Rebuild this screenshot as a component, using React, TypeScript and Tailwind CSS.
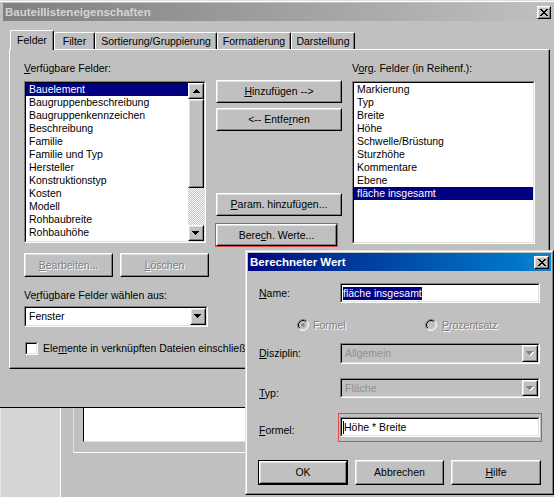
import React from "react";

type P = { className?: string; innerClassName?: string; children?: React.ReactNode };

function Raised({ className = "", innerClassName = "", children }: P) {
  return (
    <div className={`border border-t-white border-l-white border-r-black border-b-black bg-[#c0c0c0] ${className}`}>
      <div
        className={`w-full h-full border border-t-[#dfdfdf] border-l-[#dfdfdf] border-r-[#808080] border-b-[#808080] flex items-center justify-center ${innerClassName}`}
      >
        {children}
      </div>
    </div>
  );
}

function Sunken({ className = "", innerClassName = "bg-white", children }: P) {
  return (
    <div className={`border border-t-[#808080] border-l-[#808080] border-r-white border-b-white ${className}`}>
      <div
        className={`w-full h-full border border-t-black border-l-black border-r-[#dfdfdf] border-b-[#dfdfdf] overflow-hidden ${innerClassName}`}
      >
        {children}
      </div>
    </div>
  );
}

const dis = "text-[#808080] [text-shadow:1px_1px_0_#fff]";

function DownArrow({ disabled = false }: { disabled?: boolean }) {
  const d = "M0 0h7v1H0z M1 1h5v1H1z M2 2h3v1H2z M3 3h1v1H3z";
  return (
    <svg width="8" height="5" viewBox="0 0 8 5" className="block">
      {disabled && <path d={d} fill="#fff" transform="translate(1 1)" />}
      <path d={d} fill={disabled ? "#808080" : "#000"} />
    </svg>
  );
}

function UpArrow() {
  return (
    <svg width="7" height="4" viewBox="0 0 7 4" className="block">
      <path d="M3 0h1v1H3z M2 1h3v1H2z M1 2h5v1H1z M0 3h7v1H0z" fill="#000" />
    </svg>
  );
}

function XGlyph() {
  return (
    <svg width="8" height="7" viewBox="0 0 8 7" className="block">
      <path
        d="M0 0h2v1H0z M6 0h2v1H6z M1 1h2v1H1z M5 1h2v1H5z M2 2h4v1H2z M3 3h2v1H3z M2 4h4v1H2z M1 5h2v1H1z M5 5h2v1H5z M0 6h2v1H0z M6 6h2v1H6z"
        fill="#000"
      />
    </svg>
  );
}

function Radio({ checked }: { checked?: boolean }) {
  return (
    <svg width="12" height="12" viewBox="0 0 12 12" className="block shrink-0">
      <circle cx="6" cy="6" r="4.5" fill="#c0c0c0" />
      <path d="M9.89 2.11A5.5 5.5 0 0 0 2.11 9.89" stroke="#808080" fill="none" />
      <path d="M2.11 9.89A5.5 5.5 0 0 0 9.89 2.11" stroke="#fff" fill="none" />
      <path d="M9.18 2.82A4.5 4.5 0 0 0 2.82 9.18" stroke="#000" fill="none" />
      <path d="M2.82 9.18A4.5 4.5 0 0 0 9.18 2.82" stroke="#dfdfdf" fill="none" />
      {checked && <circle cx="6" cy="6" r="1.8" fill="#808080" />}
    </svg>
  );
}

function Tab({ children, selected, className }: { children: React.ReactNode; selected?: boolean; className: string }) {
  if (selected) {
    return (
      <div
        className={`relative z-10 h-[20px] -mb-px bg-[#c0c0c0] border-t border-l border-r border-t-white border-l-white border-r-black rounded-t-[2px] shadow-[inset_-1px_0_#808080] flex items-center justify-center whitespace-nowrap ${className}`}
      >
        {children}
      </div>
    );
  }
  return (
    <div
      className={`h-[17px] bg-[#c0c0c0] border-t border-l border-r border-t-white border-l-white border-r-black rounded-t-[2px] shadow-[inset_-1px_0_#808080] flex items-center justify-center whitespace-nowrap ${className}`}
    >
      {children}
    </div>
  );
}

const leftItems = [
  "Bauelement",
  "Baugruppenbeschreibung",
  "Baugruppenkennzeichen",
  "Beschreibung",
  "Familie",
  "Familie und Typ",
  "Hersteller",
  "Konstruktionstyp",
  "Kosten",
  "Modell",
  "Rohbaubreite",
  "Rohbauhöhe",
  "Typenkommentare",
];

const rightItems = [
  "Markierung",
  "Typ",
  "Breite",
  "Höhe",
  "Schwelle/Brüstung",
  "Sturzhöhe",
  "Kommentare",
  "Ebene",
  "fläche insgesamt",
];

export default function App() {
  return (
    <div className="relative w-[554px] h-[497px] overflow-hidden bg-[#c0c0c0] text-black font-['Liberation_Sans',Arial,sans-serif] text-[10.5px] leading-[13px]">
      {/* Main window */}
      <div className="w-[556px] h-[408px] flex flex-col bg-[#c0c0c0] border-b border-b-black">
        <div className="h-px shrink-0 bg-[#dfdfdf]" />
        <div className="h-px shrink-0 bg-white" />
        <div className="h-px shrink-0" />
        <div className="mx-[3px] h-[18px] shrink-0 flex items-center bg-linear-to-r from-[#808080] to-[#c0c0c0] pl-[2px] pr-[2px]">
          <span className="flex-1 font-bold text-[11.5px] text-[#d4d4d4]">Bauteillisteneigenschaften</span>
          <Raised className="w-[14px] h-[13px]">
            <XGlyph />
          </Raised>
        </div>

        {/* Tabs */}
        <div className="mt-[9px] h-[19px] shrink-0 flex items-end pl-[10px]">
          <Tab selected className="w-[44px]">Felder</Tab>
          <Tab className="w-[41px]">Filter</Tab>
          <Tab className="w-[122px]">Sortierung/Gruppierung</Tab>
          <Tab className="w-[74px]">Formatierung</Tab>
          <Tab className="w-[64px]">Darstellung</Tab>
        </div>

        {/* Panel */}
        <div className="ml-[9px] w-[541px] h-[320px] shrink-0 border border-t-white border-l-white border-r-black border-b-black">
          <div className="w-full h-full border-r border-b border-r-[#808080] border-b-[#808080] flex pt-[12px] pl-[14px]">
            {/* Left column */}
            <div className="w-[182px] flex flex-col">
              <div className="h-[13px] whitespace-nowrap">
                <u>V</u>erfügbare Felder:
              </div>
              <Sunken className="mt-[6px] w-[182px] h-[162px]" innerClassName="bg-white flex">
                <div className="flex-1 overflow-hidden">
                  {leftItems.map((it, i) => (
                    <div
                      key={it}
                      className={`h-[13px] pl-[3px] whitespace-nowrap ${i === 0 ? "bg-[#000080] text-white" : ""}`}
                    >
                      {it}
                    </div>
                  ))}
                </div>
                <div className="w-[16px] h-full shrink-0 flex flex-col">
                  <Raised className="w-[16px] h-[16px] shrink-0">
                    <UpArrow />
                  </Raised>
                  <Raised className="w-[16px] h-[89px] shrink-0" />
                  <div className="flex-1 bg-[repeating-conic-gradient(#c0c0c0_0%_25%,#ffffff_0%_50%)] bg-[length:2px_2px]" />
                  <Raised className="w-[16px] h-[16px] shrink-0">
                    <DownArrow />
                  </Raised>
                </div>
              </Sunken>
              <div className="mt-[10px] flex gap-[7px]">
                <Raised className="w-[89px] h-[24px] shrink-0">
                  <span className={dis}>
                    <u>B</u>earbeiten...
                  </span>
                </Raised>
                <Raised className="w-[89px] h-[24px] shrink-0">
                  <span className={dis}>
                    <u>L</u>öschen
                  </span>
                </Raised>
              </div>
              <div className="mt-[12px] h-[13px] whitespace-nowrap">
                Ve<u>r</u>fügbare Felder wählen aus:
              </div>
              <Sunken className="mt-[4px] w-[184px] h-[21px] shrink-0" innerClassName="bg-white flex items-center">
                <span className="flex-1 pl-[3px]">Fenster</span>
                <Raised className="w-[16px] h-[17px] shrink-0">
                  <DownArrow />
                </Raised>
              </Sunken>
              <div className="mt-[15px] ml-px flex items-center gap-[5px] whitespace-nowrap">
                <Sunken className="w-[13px] h-[13px] shrink-0" />
                <span>
                  Ele<u>m</u>ente in verknüpften Dateien einschließen
                </span>
              </div>
            </div>

            {/* Middle column */}
            <div className="ml-[10px] w-[126px] flex flex-col pt-[18px]">
              <Raised className="w-[126px] h-[23px]">
                <span>
                  <u>H</u>inzufügen --&gt;
                </span>
              </Raised>
              <Raised className="mt-[5px] w-[126px] h-[23px]">
                <span>
                  &lt;-- Entfe<u>r</u>nen
                </span>
              </Raised>
              <Raised className="mt-[62px] w-[126px] h-[23px]">
                <span>
                  <u>P</u>aram. hinzufügen...
                </span>
              </Raised>
              <div className="mt-[7px] -ml-px w-[123px] h-[24px] border border-[#e04848]">
                <Raised className="w-full h-full border-t-transparent border-l-transparent">
                  <span>
                    Bere<u>c</u>h. Werte...
                  </span>
                </Raised>
              </div>
            </div>

            {/* Right column */}
            <div className="ml-[10px] w-[183px] flex flex-col">
              <div className="h-[13px] whitespace-nowrap">
                V<u>o</u>rg. Felder (in Reihenf.):
              </div>
              <Sunken className="mt-[6px] w-[183px] h-[163px]" innerClassName="bg-white">
                {rightItems.map((it, i) => (
                  <div
                    key={it}
                    className={`h-[13px] pl-[3px] whitespace-nowrap ${
                      i === rightItems.length - 1 ? "bg-[#000080] text-white" : ""
                    }`}
                  >
                    {it}
                  </div>
                ))}
              </Sunken>
            </div>
          </div>
        </div>
      </div>

      {/* Background application below the window */}
      <div className="h-[89px] flex">
        <div className="w-[61px] h-full bg-[#d4d4d4] border-l border-l-[#e8e8e8] border-r border-r-white" />
        <div className="w-[12px]" />
        <div className="flex-1 h-[45px] border-l border-l-[#e0e0e0] border-b border-b-white pl-[9px]">
          <div className="h-[34px] bg-white border-l border-l-black border-b border-b-[#dfdfdf]" />
        </div>
      </div>

      {/* Dialog: Berechneter Wert */}
      <div className="absolute left-[245px] top-[250px] w-[309px] h-[245px] border border-t-[#dfdfdf] border-l-[#dfdfdf] border-r-black border-b-black bg-[#c0c0c0]">
        <div className="w-full h-full border border-t-white border-l-white border-r-[#808080] border-b-[#808080] p-px flex flex-col">
          <div className="h-[18px] shrink-0 flex items-center bg-linear-to-r from-[#000080] to-[#1084d0] pl-[2px] pr-[2px]">
            <span className="flex-1 font-bold text-white text-[11.5px]">Berechneter Wert</span>
            <Raised className="w-[15px] h-[13px]">
              <XGlyph />
            </Raised>
          </div>

          <div className="pl-[11px] flex flex-col">
            {/* Name */}
            <div className="mt-[12px] h-[20px] flex items-center">
              <div className="w-[81px]">
                <u>N</u>ame:
              </div>
              <Sunken className="w-[200px] h-[20px]" innerClassName="bg-white flex items-center pl-px">
                <span className="bg-[#000080] text-white whitespace-nowrap">fläche insgesamt</span>
              </Sunken>
            </div>

            {/* Radios */}
            <div className="mt-[16px] h-[12px] flex items-center pl-[38px]">
              <div className="w-[128px] flex items-center gap-[4px]">
                <Radio checked />
                <span className={dis}>Formel</span>
              </div>
              <div className="flex items-center gap-[5px]">
                <Radio />
                <span className={dis}>
                  <u>P</u>rozentsatz
                </span>
              </div>
            </div>

            {/* Disziplin */}
            <div className="mt-[12px] h-[21px] flex items-center">
              <div className="w-[81px]">
                <u>D</u>isziplin:
              </div>
              <Sunken className="w-[200px] h-[21px]" innerClassName="bg-[#c0c0c0] flex items-center">
                <span className="flex-1 pl-[3px] text-[#909090]">Allgemein</span>
                <Raised className="w-[16px] h-[17px] shrink-0">
                  <DownArrow disabled />
                </Raised>
              </Sunken>
            </div>

            {/* Typ */}
            <div className="mt-[14px] h-[20px] flex items-start">
              <div className="w-[81px] mt-[9px]">
                <u>T</u>yp:
              </div>
              <Sunken className="w-[200px] h-[20px]" innerClassName="bg-[#c0c0c0] flex items-center">
                <span className="flex-1 pl-[3px] text-[#909090]">Fläche</span>
                <Raised className="w-[16px] h-[16px] shrink-0">
                  <DownArrow disabled />
                </Raised>
              </Sunken>
            </div>

            {/* Formel */}
            <div className="mt-[15px] h-[29px] flex items-start">
              <div className="w-[79px] mt-[11px]">
                <u>F</u>ormel:
              </div>
              <div className="w-[204px] h-[29px] border border-[#e04848] pt-[3px] pl-px">
                <Sunken className="w-[200px] h-[20px]" innerClassName="bg-white flex items-center pl-px">
                  <span className="w-px h-[13px] bg-black shrink-0" />
                  <span className="whitespace-nowrap">Höhe * Breite</span>
                </Sunken>
              </div>
            </div>

            {/* Buttons */}
            <div className="mt-[18px] -ml-px flex gap-[7px]">
              <div className="w-[90px] h-[25px] border border-black">
                <Raised className="w-full h-full">
                  <span>OK</span>
                </Raised>
              </div>
              <Raised className="w-[89px] h-[25px]">
                <span>Abbrechen</span>
              </Raised>
              <Raised className="w-[90px] h-[25px]">
                <span>
                  <u>H</u>ilfe
                </span>
              </Raised>
            </div>
          </div>
        </div>
      </div>
    </div>
  );
}
